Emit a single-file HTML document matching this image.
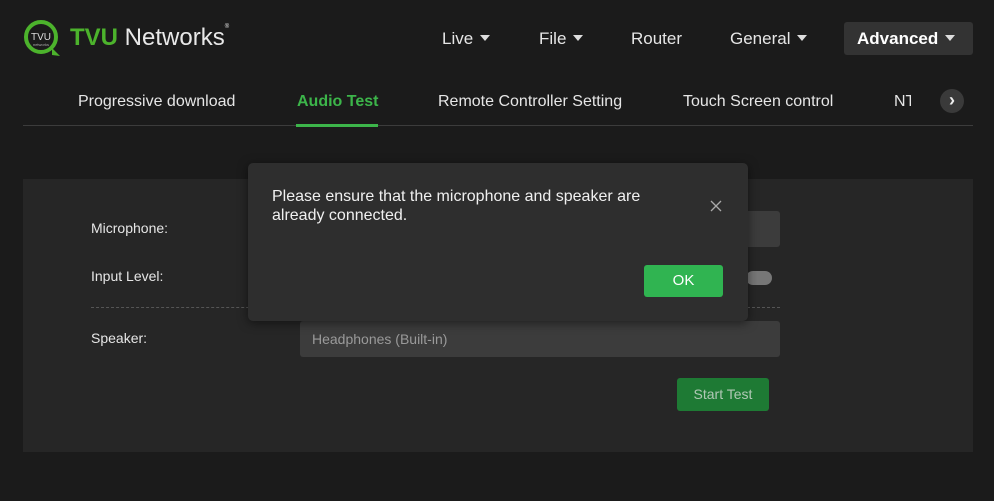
<!DOCTYPE html>
<html><head><style>
*{margin:0;padding:0;box-sizing:border-box}
body{width:994px;height:501px;background:#1b1b1b;font-family:"Liberation Sans",Arial,sans-serif;color:#e8e8e8;position:relative;overflow:hidden}
.a{position:absolute}
.nav{font-size:17px;color:#e6e6e6;top:29px}
.caret{display:inline-block;width:0;height:0;border-left:5px solid transparent;border-right:5px solid transparent;border-top:6px solid #ddd;margin-left:7px;vertical-align:3px}
.tab{font-size:16px;color:#e6e6e6;top:93px}
.lbl{font-size:14px;color:#e6e6e6}
</style></head><body>
<svg class="a" style="left:22px;top:18px" width="42" height="42" viewBox="0 0 42 42">
<circle cx="19" cy="19" r="15" fill="none" stroke="#4cb32c" stroke-width="4"/>
<path d="M30 30 L38 38 L30 37 Z" fill="#4cb32c"/>
<text x="19" y="22" font-size="10" fill="#ddd" text-anchor="middle" font-family="Liberation Sans">TVU</text>
<text x="19" y="28" font-size="4" fill="#aaa" text-anchor="middle" font-family="Liberation Sans">networks</text>
</svg>
<div class="a" style="left:70px;top:24px;font-size:24px;"><b style="color:#4cb32c">TVU</b> <span style="color:#e8e8e8">Networks</span><span style="font-size:6px;vertical-align:top">®</span></div>
<div class="a nav" style="left:442px">Live<span class="caret"></span></div>
<div class="a nav" style="left:539px">File<span class="caret"></span></div>
<div class="a nav" style="left:631px">Router</div>
<div class="a nav" style="left:730px">General<span class="caret"></span></div>
<div class="a" style="left:844px;top:22px;width:129px;height:33px;background:#333;border-radius:3px"></div>
<div class="a nav" style="left:857px;font-weight:bold;color:#fff">Advanced<span class="caret"></span></div>
<div class="a tab" style="left:78px">Progressive download</div>
<div class="a tab" style="left:297px;color:#3cb54a;font-weight:bold">Audio Test</div>
<div class="a tab" style="left:438px">Remote Controller Setting</div>
<div class="a tab" style="left:683px">Touch Screen control</div>
<div class="a tab" style="left:894px;width:17px;overflow:hidden;white-space:nowrap">NTP</div>
<div class="a" style="left:940px;top:89px;width:24px;height:24px;border-radius:50%;background:#3a3a3a;color:#eee;font-size:18px;text-align:center;line-height:23px;font-weight:bold">›</div>
<div class="a" style="left:23px;top:125px;width:950px;height:1px;background:#3c3c3c"></div>
<div class="a" style="left:296px;top:124px;width:82px;height:3px;background:#3cb54a"></div>
<div class="a" style="left:23px;top:179px;width:950px;height:273px;background:#262626"></div>
<div class="a lbl" style="left:91px;top:220px">Microphone:</div>
<div class="a lbl" style="left:91px;top:268px">Input Level:</div>
<div class="a lbl" style="left:91px;top:330px">Speaker:</div>
<div class="a" style="left:300px;top:211px;width:480px;height:36px;background:#3c3c3c;border-radius:3px"></div>
<div class="a" style="left:746px;top:271px;width:26px;height:14px;background:#777;border-radius:7px"></div>
<div class="a" style="left:91px;top:307px;width:689px;border-top:1px dashed #555"></div>
<div class="a" style="left:300px;top:321px;width:480px;height:36px;background:#3c3c3c;border-radius:3px;font-size:14px;color:#9a9a9a;padding:10px 12px">Headphones (Built-in)</div>
<div class="a" style="left:677px;top:378px;width:92px;height:33px;background:#1e7a34;border-radius:3px;font-size:14px;color:#b0c8b5;text-align:center;line-height:33px">Start Test</div>
<div class="a" style="left:248px;top:163px;width:500px;height:158px;background:#2e2e2e;border-radius:5px;box-shadow:0 2px 10px rgba(0,0,0,.5)"></div>
<div class="a" style="left:272px;top:187px;font-size:16px;line-height:19px;color:#f0f0f0">Please ensure that the microphone and speaker are<br>already connected.</div>
<svg class="a" style="left:710px;top:200px" width="12" height="12" viewBox="0 0 12 12"><path d="M1 1L11 11M11 1L1 11" stroke="#aaa" stroke-width="1.3"/></svg>
<div class="a" style="left:644px;top:265px;width:79px;height:32px;background:#30b451;border-radius:3px;font-size:15px;color:#fff;text-align:center;line-height:32px">OK</div>
</body></html>
